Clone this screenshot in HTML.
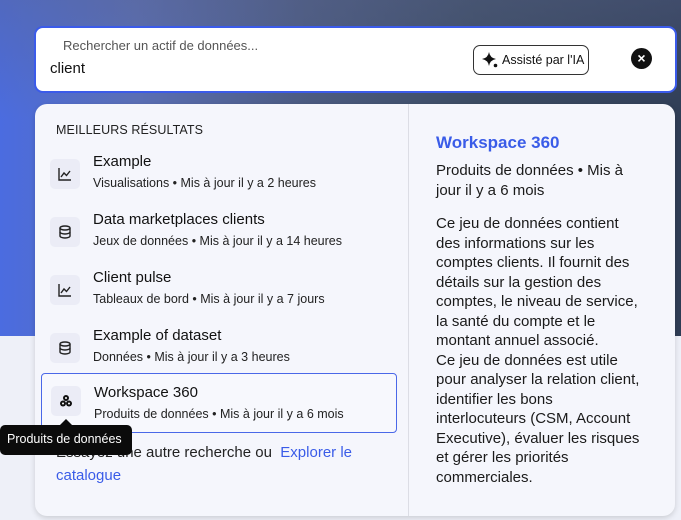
<!DOCTYPE html>
<html><head><meta charset="utf-8"><style>
*{margin:0;padding:0;box-sizing:border-box}
body{width:681px;height:520px;overflow:hidden;position:relative;font-family:"Liberation Sans","DejaVu Sans",sans-serif;background:#eef0f8;color:#1a1a1a}
.bg{position:absolute;left:0;top:0;width:681px;height:336px;background:linear-gradient(90deg,#4b6ce0 0%,#5a6fb8 20%,#4a5a80 45%,#3a4a60 70%,#2f3d55 100%)}
.bg2{position:absolute;left:0;top:0;width:681px;height:120px;background:linear-gradient(180deg,rgba(90,100,140,.4),rgba(0,0,0,0))}
.search{position:absolute;left:34px;top:26px;width:643px;height:67px;background:#fff;border:2px solid #3b5bea;border-radius:9px}
.ph{position:absolute;left:27px;top:10px;font-size:13px;color:#555}
.val{position:absolute;left:14px;top:32px;font-size:15px;color:#111}
.ai{position:absolute;left:437px;top:17px;width:116px;height:30px;border:1px solid #333;border-radius:7px;font-size:12.5px;padding:7px 0 0 28px;color:#111}
.ai svg{position:absolute;left:7px;top:5px}
.x{position:absolute;left:595px;top:20px;width:21px;height:21px;border-radius:50%;background:#111;color:#fff;font-size:14px;font-weight:bold;text-align:center;line-height:21px}
.panel{position:absolute;left:35px;top:104px;width:640px;height:412px;background:#f5f6fc;border-radius:12px;box-shadow:0 2px 6px rgba(0,0,0,.15)}
.div{position:absolute;left:373px;top:0;width:1px;height:412px;background:#dcdde5}
.hd{position:absolute;left:21px;top:19px;font-size:12.5px;color:#222;letter-spacing:.1px}
.row{position:absolute;left:6px;width:356px;height:60px}
.row.sel{border:1px solid #4a68e8;border-radius:4px;background:#f7f8fd}
.ic{position:absolute;left:9px;top:14px;width:30px;height:30px;background:#ebecf6;border-radius:5px}
.ic svg{position:absolute;left:8px;top:8px}
.t{position:absolute;left:52px;top:8px;font-size:15px;color:#111}
.s{position:absolute;left:52px;top:31px;font-size:12.5px;color:#222}
.foot{position:absolute;left:21px;top:337px;font-size:15px;line-height:23px;color:#222;width:330px}
.foot a{color:#3a5ce8;text-decoration:none}
.tip{position:absolute;left:0;top:425px;width:132px;height:30px;background:#0b0b0b;color:#fff;font-size:12.5px;border-radius:5px;padding:7px 0 0 7px}
.tip:before{content:"";position:absolute;left:60px;top:-6px;border:6px solid transparent;border-top:0;border-bottom-color:#0b0b0b}
.rt{position:absolute;left:401px;top:29px;width:210px}
.rh{font-size:17px;font-weight:bold;color:#3a5ce8}
.rm{margin-top:8px;font-size:15px;line-height:19.5px;color:#1a1a1a}
.rd{margin-top:14px;font-size:15px;line-height:19.5px;color:#1a1a1a}
</style></head><body>
<div class="bg"></div><div class="bg2"></div>
<div class="search">
<div class="ph">Rechercher un actif de données...</div>
<div class="val">client</div>
<div class="ai"><svg width="18" height="18" viewBox="0 0 18 18"><path d="M8 1 Q9 7 15 8 Q9 9 8 15 Q7 9 1 8 Q7 7 8 1Z" fill="#111"/><circle cx="14.5" cy="14.5" r="1.8" fill="#111"/></svg>Assisté par l'IA</div>
<div class="x">×</div>
</div>
<div class="panel">
<div class="div"></div>
<div class="hd">MEILLEURS RÉSULTATS</div>
<div class="row" style="top:41px"><div class="ic"><svg width="14" height="14" viewBox="0 0 14 14" fill="none" stroke="#222" stroke-width="1.4"><path d="M1 1V13H13"/><path d="M3 10L6 6L8.5 8.5L12 4"/></svg></div><div class="t">Example</div><div class="s">Visualisations • Mis à jour il y a 2 heures</div></div>
<div class="row" style="top:99px"><div class="ic"><svg width="14" height="14" viewBox="0 0 14 14" fill="none" stroke="#222" stroke-width="1.4"><ellipse cx="7" cy="3" rx="5" ry="2"/><path d="M2 3V11C2 12.1 4.2 13 7 13S12 12.1 12 11V3"/><path d="M2 7C2 8.1 4.2 9 7 9S12 8.1 12 7"/></svg></div><div class="t">Data marketplaces clients</div><div class="s">Jeux de données • Mis à jour il y a 14 heures</div></div>
<div class="row" style="top:157px"><div class="ic"><svg width="14" height="14" viewBox="0 0 14 14" fill="none" stroke="#222" stroke-width="1.4"><path d="M1 1V13H13"/><path d="M3 10L6 6L8.5 8.5L12 4"/></svg></div><div class="t">Client pulse</div><div class="s">Tableaux de bord • Mis à jour il y a 7 jours</div></div>
<div class="row" style="top:215px"><div class="ic"><svg width="14" height="14" viewBox="0 0 14 14" fill="none" stroke="#222" stroke-width="1.4"><ellipse cx="7" cy="3" rx="5" ry="2"/><path d="M2 3V11C2 12.1 4.2 13 7 13S12 12.1 12 11V3"/><path d="M2 7C2 8.1 4.2 9 7 9S12 8.1 12 7"/></svg></div><div class="t">Example of dataset</div><div class="s">Données • Mis à jour il y a 3 heures</div></div>
<div class="row sel" style="top:269px"><div class="ic" style="top:12px"><svg width="14" height="14" viewBox="0 0 14 14" fill="#111"><circle cx="7" cy="4" r="3"/><circle cx="4" cy="9.5" r="3"/><circle cx="10" cy="9.5" r="3"/><circle cx="7" cy="4" r="1" fill="#fff"/><circle cx="4" cy="9.5" r="1" fill="#fff"/><circle cx="10" cy="9.5" r="1" fill="#fff"/></svg></div><div class="t" style="top:10px">Workspace 360</div><div class="s" style="top:33px">Produits de données • Mis à jour il y a 6 mois</div></div>
<div class="foot">Essayez une autre recherche ou &nbsp;<a>Explorer le catalogue</a></div>
<div class="rt">
<div class="rh">Workspace 360</div>
<div class="rm">Produits de données • Mis à jour il y a 6 mois</div>
<div class="rd">Ce jeu de données contient des informations sur les comptes clients. Il fournit des détails sur la gestion des comptes, le niveau de service, la santé du compte et le montant annuel associé.<br>Ce jeu de données est utile pour analyser la relation client, identifier les bons interlocuteurs (CSM, Account Executive), évaluer les risques et gérer les priorités commerciales.</div>
</div>
</div>
<div class="tip">Produits de données</div>
</body></html>
